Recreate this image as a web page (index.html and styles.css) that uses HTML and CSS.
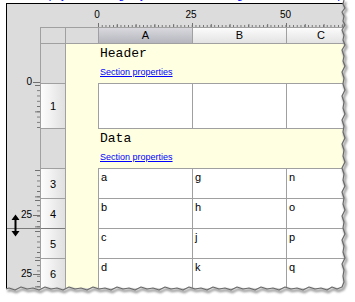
FILE: index.html
```html
<!DOCTYPE html>
<html lang="en">
<head>
  <meta charset="UTF-8" />
  <title>Report Designer</title>
  <link rel="stylesheet" href="styles.css">
</head>
<body>

  <div class="shot">
    <div class="tip"><a href="#">Tip: you can drag any ruler mark to change a row or column quickly</a></div>

    <div class="designer">
      <!-- top ruler -->
      <div class="ruler-corner"></div>
      <div class="hruler">
        <span class="hmark" style="left: -1px">0</span>
        <span class="hmark" style="left: 93px">25</span>
        <span class="hmark" style="left: 187.5px">50</span>
      </div>

      <!-- column headers -->
      <div class="vr"></div>
      <div class="ch blank"></div>
      <div class="ch blank"></div>
      <div class="ch sel">A</div>
      <div class="ch">B</div>
      <div class="ch">C</div>

      <!-- header section -->
      <div class="vr"></div>
      <div class="rh band"></div>
      <div class="margin"></div>
      <div class="section">
        <div class="section-title">Header</div>
        <div class="props"><a href="#">Section properties</a></div>
      </div>

      <!-- row 1 -->
      <div class="vr ticks"><span class="mark zero">0</span></div>
      <div class="rh">1</div>
      <div class="margin"></div>
      <div class="cell"></div>
      <div class="cell"></div>
      <div class="cell"></div>

      <!-- data section -->
      <div class="vr"></div>
      <div class="rh band top"></div>
      <div class="margin"></div>
      <div class="section top">
        <div class="section-title">Data</div>
        <div class="props"><a href="#">Section properties</a></div>
      </div>

      <!-- data rows -->
      <div class="vr ticks"></div>
      <div class="rh">3</div>
      <div class="margin"></div>
      <div class="cell">a</div>
      <div class="cell">g</div>
      <div class="cell">n</div>

      <div class="vr ticks"><span class="mark row4">25</span></div>
      <div class="rh">4</div>
      <div class="margin"></div>
      <div class="cell">b</div>
      <div class="cell">h</div>
      <div class="cell">o</div>

      <div class="vr ticks resize"></div>
      <div class="rh resize">5</div>
      <div class="margin"></div>
      <div class="cell">c</div>
      <div class="cell">j</div>
      <div class="cell">p</div>

      <div class="vr ticks"><span class="mark row6">25</span></div>
      <div class="rh">6</div>
      <div class="margin"></div>
      <div class="cell">d</div>
      <div class="cell">k</div>
      <div class="cell">q</div>
    </div>

    <!-- row resize cursor -->
    <svg class="cursor" width="9" height="23" viewBox="0 0 9 23">
      <path d="M0.5 6 L4.5 0.5 L8.5 6 Z M0.5 17 L4.5 22.5 L8.5 17 Z" fill="#000"/>
      <rect x="3.5" y="5" width="2" height="13" fill="#000"/>
    </svg>

    <!-- torn paper edge -->
    <svg class="tear" width="355" height="302" viewBox="0 0 355 302">
      <defs>
        <filter id="soft" x="-10%" y="-10%" width="120%" height="120%">
          <feGaussianBlur stdDeviation="1.2"/>
        </filter>
      </defs>
      <path fill="#fff" d="M355 0 L344 0 L343 4 L345 8 L342 12 L344 16 L343 21 L345 25 L342 30 L344 35 L343 40 L345 45 L342 50 L344 56 L343 61 L345 66 L342 72 L344 78 L343 84 L345 90 L342 96 L344 102 L343 108 L345 114 L342 120 L344 126 L343 132 L345 138 L342 144 L344 150 L343 156 L345 162 L342 168 L344 174 L343 180 L345 186 L342 192 L344 198 L343 204 L345 210 L342 216 L344 222 L343 228 L345 234 L342 240 L344 246 L343 252 L345 258 L342 264 L344 270 L343 276 L344 282 L342 287 L337 289 L332 287 L327 290 L321 288 L315 289 L309 287 L303 290 L297 288 L291 289 L285 287 L279 290 L273 288 L267 289 L261 287 L255 290 L249 288 L243 289 L237 287 L231 290 L225 288 L219 289 L213 287 L207 290 L201 288 L195 289 L189 287 L183 290 L177 288 L171 289 L165 287 L159 290 L153 288 L147 289 L141 287 L135 290 L129 288 L123 289 L117 287 L111 290 L105 288 L99 289 L93 287 L87 290 L81 288 L75 289 L69 287 L63 290 L57 288 L51 289 L45 287 L39 290 L33 288 L27 289 L21 287 L15 290 L9 288 L5 289 L0 289 L0 302 L355 302 Z"/>
      <g fill="none" stroke-linejoin="round">
        <path class="tear-shadow" filter="url(#soft)" transform="translate(1.5 2)" d="M344 0 L343 4 L345 8 L342 12 L344 16 L343 21 L345 25 L342 30 L344 35 L343 40 L345 45 L342 50 L344 56 L343 61 L345 66 L342 72 L344 78 L343 84 L345 90 L342 96 L344 102 L343 108 L345 114 L342 120 L344 126 L343 132 L345 138 L342 144 L344 150 L343 156 L345 162 L342 168 L344 174 L343 180 L345 186 L342 192 L344 198 L343 204 L345 210 L342 216 L344 222 L343 228 L345 234 L342 240 L344 246 L343 252 L345 258 L342 264 L344 270 L343 276 L344 282 L342 287 L337 289 L332 287 L327 290 L321 288 L315 289 L309 287 L303 290 L297 288 L291 289 L285 287 L279 290 L273 288 L267 289 L261 287 L255 290 L249 288 L243 289 L237 287 L231 290 L225 288 L219 289 L213 287 L207 290 L201 288 L195 289 L189 287 L183 290 L177 288 L171 289 L165 287 L159 290 L153 288 L147 289 L141 287 L135 290 L129 288 L123 289 L117 287 L111 290 L105 288 L99 289 L93 287 L87 290 L81 288 L75 289 L69 287 L63 290 L57 288 L51 289 L45 287 L39 290 L33 288 L27 289 L21 287 L15 290 L9 288 L6 289"/>
        <path class="tear-line" d="M344 0 L343 4 L345 8 L342 12 L344 16 L343 21 L345 25 L342 30 L344 35 L343 40 L345 45 L342 50 L344 56 L343 61 L345 66 L342 72 L344 78 L343 84 L345 90 L342 96 L344 102 L343 108 L345 114 L342 120 L344 126 L343 132 L345 138 L342 144 L344 150 L343 156 L345 162 L342 168 L344 174 L343 180 L345 186 L342 192 L344 198 L343 204 L345 210 L342 216 L344 222 L343 228 L345 234 L342 240 L344 246 L343 252 L345 258 L342 264 L344 270 L343 276 L344 282 L342 287 L337 289 L332 287 L327 290 L321 288 L315 289 L309 287 L303 290 L297 288 L291 289 L285 287 L279 290 L273 288 L267 289 L261 287 L255 290 L249 288 L243 289 L237 287 L231 290 L225 288 L219 289 L213 287 L207 290 L201 288 L195 289 L189 287 L183 290 L177 288 L171 289 L165 287 L159 290 L153 288 L147 289 L141 287 L135 290 L129 288 L123 289 L117 287 L111 290 L105 288 L99 289 L93 287 L87 290 L81 288 L75 289 L69 287 L63 290 L57 288 L51 289 L45 287 L39 290 L33 288 L27 289 L21 287 L15 290 L9 288 L6 289"/>
      </g>
    </svg>
  </div>

</body>
</html>
```

FILE: styles.css
```css
* {
  box-sizing: border-box;
}

body {
  margin: 0;
  background: #fff;
  font-family: 'Liberation Sans', Arial, sans-serif;
  color: #000;
}

.shot {
  position: relative;
  width: 355px;
  height: 302px;
  overflow: hidden;
}

.tip {
  height: 3px;
  overflow: hidden;
  padding-left: 40px;
}

.tip a {
  display: block;
  margin-top: -11px;
  font-size: 11px;
  line-height: 13px;
  color: #0000ff;
  text-decoration: none;
  white-space: nowrap;
}

.designer {
  margin-left: 6px;
  height: 299px;
  border-left: 1px solid #000;
  border-top: 1px solid #000;
  background: #dcdcdc;
  display: grid;
  grid-template-columns: 33px 25px 33px 94px 94px 1fr;
  grid-template-rows: 23px 17px 39px 45px 40px repeat(4, 30px) 1fr;
}

/* rulers */
.ruler-corner {
  grid-column: 1 / 4;
}

.hruler {
  grid-column: 4 / 7;
  position: relative;
  background-image:
    linear-gradient(to right, #707070 1px, transparent 1px),
    linear-gradient(to right, #707070 1px, transparent 1px),
    linear-gradient(to right, #707070 1px, transparent 1px);
  background-size: 94px 4px, 18.8px 3px, 3.76px 2px;
  background-position: 0 100%, 0 100%, 0 100%;
  background-repeat: repeat-x;
}

.hmark {
  position: absolute;
  top: 5px;
  transform: translateX(-50%);
  font-size: 10px;
  line-height: 12px;
}

.vr {
  position: relative;
}

.vr.ticks {
  background-image:
    linear-gradient(#707070 1px, transparent 1px),
    linear-gradient(#707070 1px, transparent 1px);
  background-size: 5px 26.4px, 3px 5.28px;
  background-position: 100% 2px, 100% 2px;
  background-repeat: repeat-y;
}

.vr.resize {
  border-top: 1px solid #7a7a7a;
}

.mark {
  position: absolute;
  right: 8px;
  font-size: 10px;
  line-height: 12px;
}

.mark::after {
  content: "";
  position: absolute;
  left: 100%;
  margin-left: 1px;
  top: 6px;
  width: 7px;
  height: 1px;
  background: #707070;
}

.mark.zero {
  top: -7px;
}

.mark.row4 {
  top: 11px;
}

.mark.row6 {
  top: 10px;
}

/* column headers */
.ch {
  border-left: 1px solid #a0a0a0;
  border-top: 1px solid #a0a0a0;
  border-bottom: 1px solid #a0a0a0;
  background: linear-gradient(#fbfbfb, #e3e3e3);
  font-size: 11px;
  line-height: 15px;
  text-align: center;
}

.ch.blank {
  background: #dcdcdc;
}

.ch.sel {
  background: linear-gradient(#d8d8de, #b6b6be);
}

/* row headers */
.rh {
  border-left: 1px solid #a0a0a0;
  border-top: 1px solid #a0a0a0;
  background: linear-gradient(to right, #fdfdfd, #e0e0e0);
  display: flex;
  align-items: center;
  justify-content: center;
  font-size: 11px;
}

.rh.band {
  border-top: none;
  background: #dcdcdc;
}

.rh.band.top {
  border-top: 1px solid #a0a0a0;
}

.rh.resize {
  border-top-color: #7a7a7a;
}

/* sections */
.margin {
  border-left: 1px solid #a0a0a0;
  background: #ffffe1;
}

.section {
  grid-column: 4 / 7;
  background: #ffffe1;
  padding: 2px 0 0 2px;
}

.section.top {
  border-top: 1px solid #a0a0a0;
}

.section-title {
  font-family: 'Liberation Mono', 'Courier New', monospace;
  font-size: 13px;
  line-height: 15px;
}

.props {
  margin-top: 6px;
  font-size: 9px;
  line-height: 11px;
}

.props a {
  color: #0000ff;
}

/* cells */
.cell {
  border-left: 1px solid #a0a0a0;
  border-top: 1px solid #a0a0a0;
  background: #fff;
  padding: 2px 0 0 2px;
  font-size: 11px;
  line-height: 13px;
}

/* overlays */
.cursor {
  position: absolute;
  left: 11px;
  top: 214px;
}

.tear {
  position: absolute;
  left: 0;
  top: 0;
  pointer-events: none;
}

.tear-shadow {
  stroke: #9a9a9a;
  stroke-width: 2.5;
}

.tear-line {
  stroke: #6a6a6a;
  stroke-width: 1.2;
}
```
